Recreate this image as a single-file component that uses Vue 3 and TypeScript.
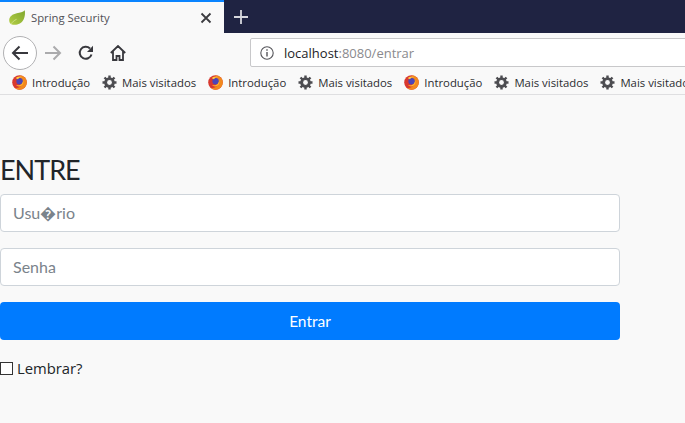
<script setup lang="ts">
const bookmarks = [
  { label: "Introdução", icon: "fox" },
  { label: "Mais visitados", icon: "gear" },
  { label: "Introdução", icon: "fox" },
  { label: "Mais visitados", icon: "gear" },
  { label: "Introdução", icon: "fox" },
  { label: "Mais visitados", icon: "gear" },
  { label: "Mais visitados", icon: "gear" },
];
</script>

<template>
  <div class="window">
    <div class="tabstrip">
      <div class="tab">
        <svg class="leaf" width="16" height="15" viewBox="0 0 16 15">
          <defs>
            <linearGradient id="leafFill" x1="0" y1="1" x2="1" y2="0">
              <stop offset="0" stop-color="#b4cf45" />
              <stop offset="1" stop-color="#7fa62e" />
            </linearGradient>
          </defs>
          <path d="M15.800 .2C14 2.300 11 2.600 7.800 3.300 3.500 4.200 .3 6.500 .2 10.200c0 1.900 .8 3.300 2 4 2.700 1 6 .8 8.600-.7 4.300-2.400 5.700-7.400 5-13.300z" fill="url(#leafFill)"/>
          <path d="M2.400 13.800c.9-1.800 2.600-3.400 5.200-4.500" stroke="#dbe7a0" stroke-width=".7" fill="none"/>
        </svg>
        <span class="tab-title">Spring Security</span>
        <svg class="tab-close" width="12" height="12" viewBox="0 0 12 12">
          <path d="M1.500 1.500l9 9M10.500 1.500l-9 9" stroke="#3c3c40" stroke-width="1.800" fill="none"/>
        </svg>
      </div>
      <svg class="new-tab" width="14" height="14" viewBox="0 0 14 14">
        <path d="M7 0v14M0 7h14" stroke="#d6d7dd" stroke-width="1.800" fill="none"/>
      </svg>
    </div>

    <div class="toolbar">
      <div class="back">
        <svg width="18" height="16" viewBox="0 0 18 16">
          <path d="M17 8H2M8.500 1.500L2 8l6.500 6.500" stroke="#38383d" stroke-width="2" fill="none"/>
        </svg>
      </div>
      <svg class="forward" width="18" height="16" viewBox="0 0 18 16">
        <path d="M1 8h15M9.500 1.500L16 8l-6.500 6.500" stroke="#ababad" stroke-width="2" fill="none"/>
      </svg>
      <svg class="reload" width="16" height="16" viewBox="0 0 16 16">
        <path d="M13.500 9.500A6 6 0 1 1 12 3.500" stroke="#38383d" stroke-width="2" fill="none"/>
        <path d="M15 .8V7H9z" fill="#38383d"/>
      </svg>
      <svg class="home" width="16" height="16" viewBox="0 0 16 16">
        <path d="M.8 8L8 1l7.200 7M3 6.500V15h3.500v-4h3v4H13V6.500" stroke="#38383d" stroke-width="1.800" fill="none"/>
      </svg>
      <div class="urlbar">
        <svg width="14" height="14" viewBox="0 0 14 14">
          <circle cx="7" cy="7" r="6.200" stroke="#55555a" stroke-width="1.100" fill="none"/>
          <path d="M7 6v4.500M7 3.300v1.500" stroke="#55555a" stroke-width="1.400"/>
        </svg>
        <span class="url"><span class="host">localhost</span>:8080/entrar</span>
      </div>
    </div>

    <div class="bookmarks">
      <div v-for="(b, i) in bookmarks" :key="i" class="bookmark">
        <svg v-if="b.icon === 'fox'" width="15" height="15" viewBox="0 0 15 15">
          <circle cx="7.500" cy="7.500" r="7.300" fill="#d8392f"/>
          <path d="M7.500 .2a7.300 7.300 0 0 1 7 9.300c-.8 2.800-3.400 5-6.500 5.200-2 0-3.500-.6-4.800-1.800 3 .4 5.800-.8 6.800-3.400L9 4z" fill="#f2891d"/>
          <circle cx="7.600" cy="6.300" r="3.200" fill="#4b45b8"/>
          <path d="M3.800 3.300C5 1.300 8 .7 10.300 2.300 8.500 2 6.700 2.700 6 4.300z" fill="#ffcb3d"/>
          <path d="M11.200 5.500c.8 2.500-.6 5.600-3.800 5.900-1.500 .1-2.800-.4-3.500-1.400 2 .7 4.300 .4 5.600-1 1-1 1.500-2.200 1.700-3.500z" fill="#ffb52e"/>
        </svg>
        <svg v-else width="15" height="15" viewBox="0 0 15 15">
          <circle cx="7.500" cy="7.500" r="4.100" stroke="#4c4c50" stroke-width="2.400" fill="none"/>
          <path d="M7.500 .5v14M.5 7.500h14M2.500 2.500l10 10M12.500 2.500l-10 10" stroke="#4c4c50" stroke-width="2.400"/>
          <circle cx="7.500" cy="7.500" r="2.400" fill="#f9f9f9"/>
        </svg>
        <span>{{ b.label }}</span>
      </div>
    </div>

    <main class="page">
      <h1>ENTRE</h1>
      <form class="login" @submit.prevent>
        <input type="text" placeholder="Usu�rio" />
        <input type="password" placeholder="Senha" />
        <button type="submit">Entrar</button>
        <label class="remember">
          <span class="box"></span>
          Lembrar?
        </label>
      </form>
    </main>
  </div>
</template>

<style>
html,
body {
  margin: 0;
  background: #f9f9f9;
  overflow: hidden;
}
</style>

<style scoped>
.window {
  width: 685px;
  height: 423px;
  overflow: hidden;
  font-family: "Open Sans", "Noto Sans", sans-serif;
  background: #f9f9f9;
}
svg {
  flex: none;
}
.tabstrip {
  height: 33px;
  display: flex;
  align-items: center;
  background: #1f2342;
}
.tab {
  width: 224px;
  height: 33px;
  box-sizing: border-box;
  border-top: 2px solid #0a84ff;
  background: #f9f9f9;
  display: flex;
  align-items: center;
  padding: 0 12px 0 9px;
}
.tab-title {
  margin-left: 6px;
  font-size: 11.3px;
  color: #505056;
  flex: 1;
}
.new-tab {
  margin-left: 10px;
}
.toolbar {
  height: 35px;
  box-sizing: border-box;
  padding-top: 4px;
  display: flex;
  align-items: center;
  background: #f9f9f9;
}
.back {
  width: 34px;
  height: 34px;
  flex: none;
  box-sizing: border-box;
  margin: 1px 0 0 3px;
  border: 1px solid #b1b1b3;
  border-radius: 50%;
  background: #fff;
  display: flex;
  align-items: center;
  justify-content: center;
}
.forward {
  margin-left: 7px;
}
.reload {
  margin-left: 16px;
}
.home {
  margin-left: 16px;
}
.urlbar {
  width: 460px;
  flex: none;
  height: 29px;
  box-sizing: border-box;
  margin-left: 124px;
  border: 1px solid #c8c8ca;
  border-radius: 2px;
  background: #fff;
  display: flex;
  align-items: center;
  padding-left: 9px;
  gap: 10px;
}
.url {
  font-size: 13px;
  color: #8a8a8e;
}
.host {
  color: #232326;
}
.bookmarks {
  height: 27px;
  box-sizing: border-box;
  border-bottom: 1px solid #dfdfe1;
  padding: 3px 0 0 12px;
  display: flex;
  align-items: center;
  gap: 12px;
  background: #f9f9f9;
  white-space: nowrap;
}
.bookmark {
  display: flex;
  align-items: center;
  gap: 5px;
  font-size: 11.35px;
  color: #2c2c30;
}
.page {
  width: 620px;
  padding-top: 58px;
}
h1 {
  margin: 0 0 7px;
  font-family: Lato, sans-serif;
  font-weight: 400;
  font-size: 27px;
  letter-spacing: -1px;
  line-height: 34px;
  color: #212529;
}
.login {
  display: flex;
  flex-direction: column;
  gap: 16px;
}
input {
  height: 38px;
  box-sizing: border-box;
  padding: 0 12px 2px;
  border: 1px solid #ced4da;
  border-radius: 4px;
  background: #fff;
  font-family: Lato, sans-serif;
  font-size: 16px;
}
input::placeholder {
  color: #7a838b;
  opacity: 1;
}
button {
  height: 38px;
  border: none;
  border-radius: 4px;
  background: #007bff;
  color: #fff;
  font-family: Lato, sans-serif;
  font-size: 15.5px;
}
.remember {
  display: flex;
  align-items: center;
  gap: 4px;
  margin-top: 2px;
  font-family: "Open Sans", sans-serif;
  font-size: 14.8px;
  color: #212529;
}
.box {
  width: 13px;
  height: 13px;
  box-sizing: border-box;
  border: 1px solid #333;
  background: #fff;
}
</style>
